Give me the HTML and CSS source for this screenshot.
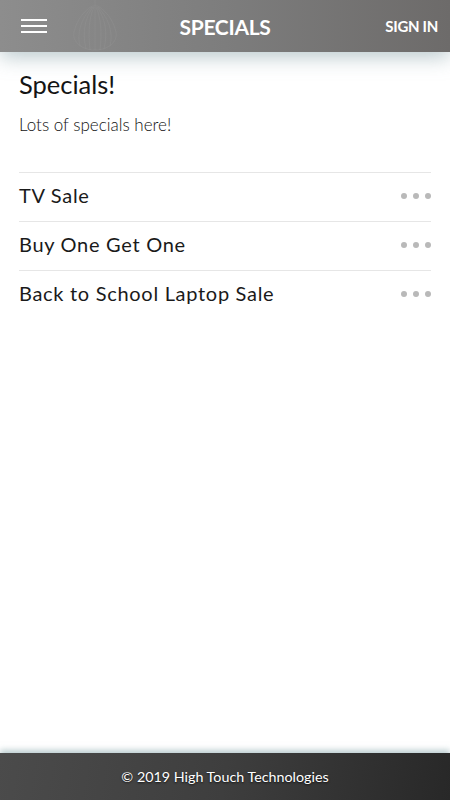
FILE: index.html
```html
<!DOCTYPE html>
<html>
<head>
  <meta charset="utf-8"/>
  <title>Specials</title>
  <link rel="stylesheet" href="styles.css">
</head>
<body>
  <div class="app">
    <header class="top-bar">
      <svg class="lamp" width="50" height="52" viewBox="0 0 50 52">
        <g fill="none" stroke="rgba(150,150,150,0.35)" stroke-width="1">
          <line x1="25" y1="0" x2="25" y2="6"/>
          <path d="M22 6 C10 14 6 24 4 32 C2 42 12 50 25 50 C38 50 48 42 46 32 C44 24 40 14 28 6 Z"/>
          <path d="M23 7 C15 18 12 32 16 49"/>
          <path d="M24 7 C19 18 18 32 20 50"/>
          <path d="M25 7 L25 50"/>
          <path d="M26 7 C31 18 32 32 30 50"/>
          <path d="M27 7 C35 18 38 32 34 49"/>
          <path d="M22 7 C10 20 7 34 10 46"/>
          <path d="M28 7 C40 20 43 34 40 46"/>
        </g>
      </svg>
      <button class="menu-btn" aria-label="Menu">
        <span></span><span></span><span></span>
      </button>
      <h1 class="bar-title">SPECIALS</h1>
      <a class="sign-in">SIGN IN</a>
    </header>

    <main class="content">
      <h2 class="page-title">Specials!</h2>
      <p class="page-intro">Lots of specials here!</p>

      <ul class="special-list">
        <li class="special-item">
          <span class="special-name">TV Sale</span>
          <span class="dots"><i></i><i></i><i></i></span>
        </li>
        <li class="special-item">
          <span class="special-name">Buy One Get One</span>
          <span class="dots"><i></i><i></i><i></i></span>
        </li>
        <li class="special-item">
          <span class="special-name">Back to School Laptop Sale</span>
          <span class="dots"><i></i><i></i><i></i></span>
        </li>
      </ul>
    </main>

    <footer class="bottom-bar">&copy; 2019 High Touch Technologies</footer>
  </div>
</body>
</html>
```

FILE: styles.css
```css
html, body {
  margin: 0;
  padding: 0;
  height: 100%;
  background: #fff;
  font-family: Lato, 'Open Sans', Arial, sans-serif;
  overflow: hidden;
}

.app {
  display: flex;
  flex-direction: column;
  height: 100%;
}

.top-bar {
  position: relative;
  z-index: 2;
  flex: 0 0 52px;
  display: flex;
  align-items: center;
  justify-content: space-between;
  padding: 0 12px 0 21px;
  background: linear-gradient(90deg, #8d8d8d 0%, #7d7d7d 50%, #6d6b6a 100%);
  box-shadow: 0 5px 20px rgba(140,165,172,0.6);
}

.lamp {
  position: absolute;
  left: 70px;
  top: 0;
}

.menu-btn {
  position: relative;
  display: flex;
  flex-direction: column;
  gap: 4px;
  width: 26px;
  padding: 0;
  background: none;
  border: none;
}

.menu-btn span {
  display: block;
  height: 2px;
  background: #fff;
}

.bar-title {
  position: absolute;
  left: 0;
  right: 0;
  margin: 0;
  text-align: center;
  color: #fff;
  font-size: 21px;
  font-weight: 700;
  letter-spacing: -0.3px;
  pointer-events: none;
}

.sign-in {
  position: relative;
  color: #fff;
  font-size: 15px;
  font-weight: 700;
  letter-spacing: -0.3px;
}

.content {
  flex: 1;
  padding: 17px 19px 0;
}

.page-title {
  margin: 0;
  font-size: 25.5px;
  font-weight: 400;
  color: #141414;
  line-height: 30px;
}

.page-intro {
  margin: 16px 0 37px;
  font-size: 17px;
  font-weight: 300;
  color: #111;
  line-height: 20px;
}

.special-list {
  list-style: none;
  margin: 0;
  padding: 0;
}

.special-item {
  display: flex;
  align-items: center;
  justify-content: space-between;
  box-sizing: border-box;
  height: 49px;
  padding-bottom: 4px;
  border-top: 1px solid #e6e6e6;
}

.special-name {
  font-size: 20px;
  letter-spacing: 0.7px;
  color: #1a1a1a;
}

.dots {
  display: flex;
  gap: 6px;
  margin-top: 2px;
}

.dots i {
  width: 6px;
  height: 6px;
  border-radius: 50%;
  background: #b9b9b9;
}

.bottom-bar {
  position: relative;
  z-index: 2;
  flex: 0 0 47px;
  display: flex;
  align-items: center;
  justify-content: center;
  background: linear-gradient(100deg, #4b4b4b 0%, #3e3e3e 50%, #282828 100%);
  box-shadow: 0 -3px 6px rgba(140,170,175,0.6);
  color: #fff;
  font-size: 14.3px;
  text-shadow: 0 1px 2px rgba(0,0,0,0.7);
}
```
